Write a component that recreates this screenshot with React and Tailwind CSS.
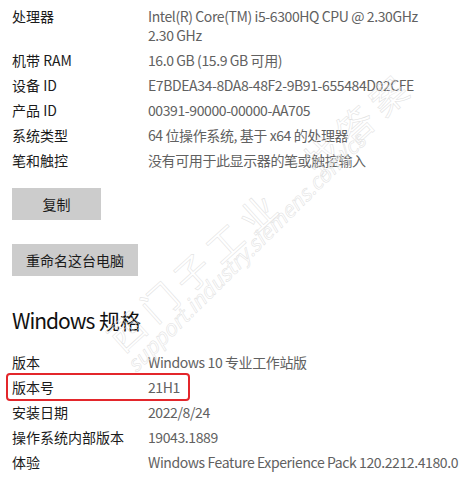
const deviceSpecs = [
  { label: '处理器', value: ['Intel(R) Core(TM) i5-6300HQ CPU @ 2.30GHz', '2.30 GHz'] },
  { label: '机带 RAM', value: ['16.0 GB (15.9 GB 可用)'] },
  { label: '设备 ID', value: ['E7BDEA34-8DA8-48F2-9B91-655484D02CFE'] },
  { label: '产品 ID', value: ['00391-90000-00000-AA705'] },
  { label: '系统类型', value: ['64 位操作系统, 基于 x64 的处理器'] },
  { label: '笔和触控', value: ['没有可用于此显示器的笔或触控输入'] },
]

const windowsSpecs = [
  { label: '版本', value: 'Windows 10 专业工作站版' },
  { label: '版本号', value: '21H1', marked: true },
  { label: '安装日期', value: '2022/8/24' },
  { label: '操作系统内部版本', value: '19043.1889' },
  { label: '体验', value: 'Windows Feature Experience Pack 120.2212.4180.0' },
]

function SpecRow({ label, value, marked }) {
  return (
    <div className="relative flex leading-[19px] whitespace-nowrap">
      {marked && (
        <div className="absolute left-[-6px] top-[-5px] w-[184px] h-[28px] rounded-[4px] border-2 border-[#e3262b]" />
      )}
      <div className="w-[136px] shrink-0 text-[#1b1b1b]">{label}</div>
      <div className="flex flex-col text-[#616161] tracking-[-0.4px]">
        {[].concat(value).map((line) => (
          <span key={line}>{line}</span>
        ))}
      </div>
    </div>
  )
}

function GrayButton({ children, width }) {
  return (
    <button className={`h-[32px] bg-[#cccccc] text-[#1b1b1b] text-[14px] ${width}`}>{children}</button>
  )
}

export default function App() {
  return (
    <div
      className="relative w-[469px] h-[484px] overflow-hidden bg-white text-[14px] pl-[12px] pt-[7px]"
      style={{ fontFamily: '"Noto Sans CJK SC", sans-serif' }}
    >
      <div className="flex flex-col gap-[6px]">
        {deviceSpecs.map((s) => (
          <SpecRow key={s.label} {...s} />
        ))}
      </div>

      <div className="flex flex-col items-start gap-[24px] mt-[18px]">
        <GrayButton width="w-[89px]">复制</GrayButton>
        <GrayButton width="w-[126px]">重命名这台电脑</GrayButton>
      </div>

      <h2 className="mt-[30px] text-[21px] leading-[28px] text-[#111]">
        <span className="tracking-[-1px]">Windows</span>&nbsp;规格
      </h2>

      <div className="flex flex-col gap-[6px] mt-[19px]">
        {windowsSpecs.map((s) => (
          <SpecRow key={s.label} {...s} />
        ))}
      </div>

      {/* watermark */}
      <div className="pointer-events-none absolute left-[112px] top-[315px] -rotate-[42deg] origin-left whitespace-nowrap text-[36px] text-transparent [-webkit-text-stroke:0.5px_#e0e0e0] tracking-[8px]">
        西门子工业　找答案
      </div>
      <div className="pointer-events-none absolute left-[130px] top-[352px] -rotate-[45deg] origin-left whitespace-nowrap text-[21px] italic text-transparent [-webkit-text-stroke:0.5px_#e0e0e0]">
        support.industry.siemens.com/cs
      </div>
    </div>
  )
}
